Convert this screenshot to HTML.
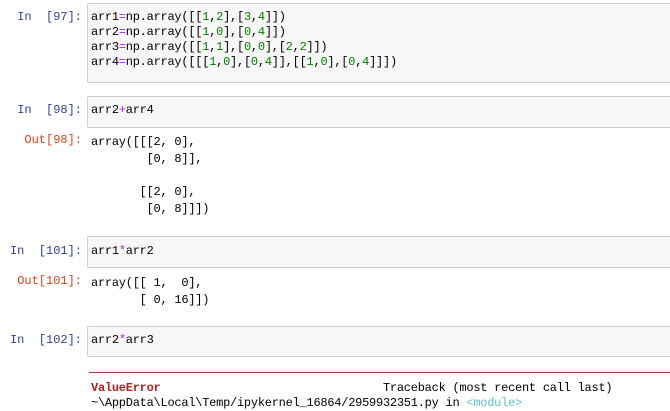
<!DOCTYPE html>
<html><head><meta charset="utf-8"><style>
body{margin:0;width:670px;height:405px;overflow:hidden;background:#fff;position:relative;font-family:"Liberation Mono","Noto Sans CJK SC",monospace;font-size:12px;color:#000}
.p{position:absolute;width:82px;text-align:right;line-height:15px;white-space:pre}
.in{color:#303F9F}.out{color:#D84315}
.box{position:absolute;left:87px;right:-2px;background:#f7f7f7;border:1px solid #cfcfcf;border-radius:2px}
.t{position:absolute;left:91px;line-height:15px;white-space:pre;letter-spacing:-0.25px}
.g{color:#008000}.o{color:#AA22FF}
</style></head><body>
<div class="p in" style="top:10px">In  [97]:</div>
<div class="box" style="top:3px;height:78px"></div>
<div class="t" style="top:10px">arr1<span class="o">=</span>np.array([[<span class="g">1</span>,<span class="g">2</span>],[<span class="g">3</span>,<span class="g">4</span>]])
arr2<span class="o">=</span>np.array([[<span class="g">1</span>,<span class="g">0</span>],[<span class="g">0</span>,<span class="g">4</span>]])
arr3<span class="o">=</span>np.array([[<span class="g">1</span>,<span class="g">1</span>],[<span class="g">0</span>,<span class="g">0</span>],[<span class="g">2</span>,<span class="g">2</span>]])
arr4<span class="o">=</span>np.array([[[<span class="g">1</span>,<span class="g">0</span>],[<span class="g">0</span>,<span class="g">4</span>]],[[<span class="g">1</span>,<span class="g">0</span>],[<span class="g">0</span>,<span class="g">4</span>]]])</div>

<div class="p in" style="top:103px">In  [98]:</div>
<div class="box" style="top:96px;height:30px"></div>
<div class="t" style="top:103px">arr2<span class="o">+</span>arr4</div>
<div class="p out" style="top:133px">Out[98]:</div>
<div class="t" style="top:134px;line-height:16.7px">array([[[2, 0],
        [0, 8]],

       [[2, 0],
        [0, 8]]])</div>

<div class="p in" style="top:244px">In  [101]:</div>
<div class="box" style="top:236px;height:30px"></div>
<div class="t" style="top:244px">arr1<span class="o">*</span>arr2</div>
<div class="p out" style="top:274px">Out[101]:</div>
<div class="t" style="top:275px;line-height:16.5px">array([[ 1,  0],
       [ 0, 16]])</div>

<div class="p in" style="top:333px">In  [102]:</div>
<div class="box" style="top:326px;height:29px"></div>
<div class="t" style="top:333px">arr2<span class="o">*</span>arr3</div>
<div style="position:absolute;left:89px;right:0;top:372px;height:1px;background:#a04040"></div>
<div class="t" style="top:381px"><b style="color:#B22222">ValueError</b>                                Traceback (most recent call last)
~\AppData\Local\Temp/ipykernel_16864/2959932351.py in <span style="color:#60C6C8">&lt;module&gt;</span></div>
</body></html>
